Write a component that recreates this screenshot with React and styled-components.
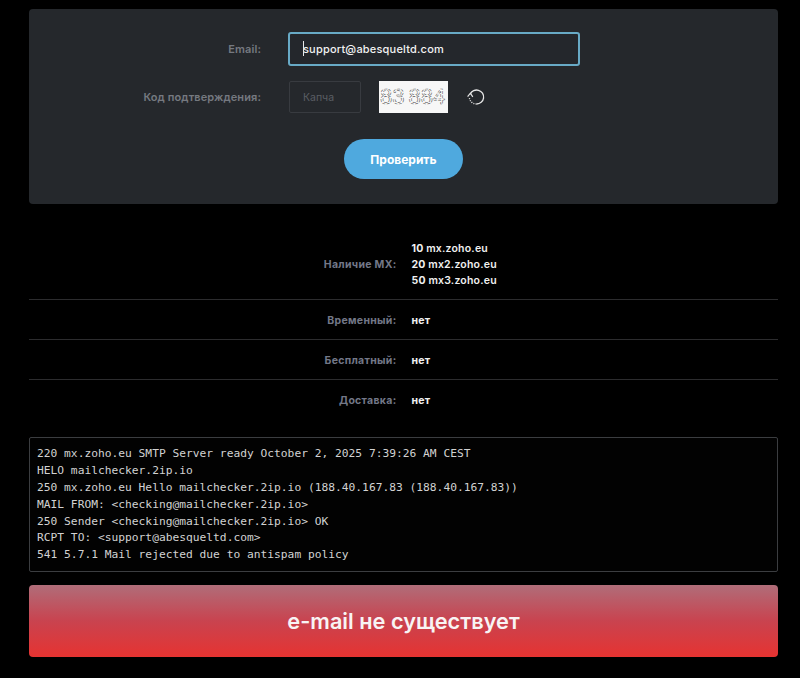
import React from 'react';
import styled, { createGlobalStyle } from 'styled-components';

const GlobalStyle = createGlobalStyle`
  html, body {
    margin: 0;
    padding: 0;
    background: #000;
  }
  * { box-sizing: border-box; }
`

const Page = styled.div`
  width: 800px;
  height: 678px;
  overflow: hidden;
  padding: 9px 22px 0 29px;
  font-family: Inter, "Noto Sans", sans-serif;
  background: #000;
`

const FormPanel = styled.form`
  height: 195px;
  padding-top: 23px;
  background: #25282c;
  border-radius: 4px;
`

const FormRow = styled.div`
  display: grid;
  grid-template-columns: 232px 1fr;
  column-gap: 27px;
  align-items: center;
  margin-bottom: 15px;
`

const FormLabel = styled.label`
  text-align: right;
  font-size: 11px;
  font-weight: 600;
  letter-spacing: 0.1px;
  color: #757980;
`

const EmailWrap = styled.div`
  position: relative;
  width: 292px;
  height: 34px;
`

const Caret = styled.span`
  position: absolute;
  left: 15px;
  top: 9px;
  width: 1px;
  height: 15px;
  background: #e8e8e8;
`

const EmailInput = styled.input`
  width: 100%;
  height: 100%;
  padding: 0 13px;
  background: #24272c;
  border: 2px solid #68aac6;
  border-radius: 3px;
  outline: none;
  color: #f2f2f2;
  font-family: inherit;
  font-size: 11px;
  font-weight: 500;
  letter-spacing: 0.2px;
`

const CaptchaRow = styled.div`
  display: flex;
  align-items: center;
  padding-left: 1px;
`

const CaptchaInput = styled.input`
  width: 72px;
  height: 32px;
  padding: 0 13px;
  background: transparent;
  border: 1px solid #383b40;
  border-radius: 2px;
  color: #eee;
  font-family: inherit;
  font-size: 10.5px;
  &::placeholder { color: #5a5e64; opacity: 1; }
`

const CaptchaImage = styled.svg`
  display: block;
  width: 69px;
  height: 32px;
  margin-left: 18px;
  background: #f7f7f7;
`

const CaptchaDigits = styled.text`
  font-family: "Liberation Sans", sans-serif;
  font-size: 22px;
  fill: #fff;
  stroke: #5c5c5c;
  stroke-width: 0.6;
  stroke-dasharray: 3 1.2;
`

const RefreshIcon = styled.svg`
  display: block;
  width: 20px;
  height: 20px;
  margin-left: 18px;
  color: #e6e6e6;
`

const SubmitWrap = styled.div`
  display: flex;
  justify-content: center;
  margin-top: 26px;
`

const SubmitButton = styled.button`
  width: 119px;
  height: 40px;
  border: 0;
  border-radius: 20px;
  background: #4fa9de;
  color: #fff;
  font-family: inherit;
  font-size: 12px;
  font-weight: 700;
`

const ResultList = styled.div`
  margin-top: 24px;
`

const ResultRow = styled.div`
  display: grid;
  grid-template-columns: 1fr 1fr;
  align-items: center;
  padding: 13px 0 10px;
  border-bottom: ${p => (p.$last ? '0' : '1px solid #2c2c2e')};
  font-size: 10.5px;
  line-height: 16px;
`

const ResultLabel = styled.div`
  padding-right: 7px;
  text-align: right;
  font-weight: 700;
  letter-spacing: 0.3px;
  color: #737888;
`

const ResultValue = styled.div`
  padding-left: 8px;
  font-weight: 700;
  letter-spacing: 0.2px;
  color: #f0f0f0;
`

const MxName = styled.span`
  font-weight: 600;
`

const SmtpLog = styled.pre`
  margin: 18px 0 0;
  padding: 8px 7px 7px;
  border: 1px solid #3b3d40;
  border-radius: 2px;
  background: #020202;
  color: #d2d2d2;
  font-family: "DejaVu Sans Mono", "Liberation Mono", monospace;
  font-size: 11.25px;
  line-height: 16.875px;
`

const ResultBanner = styled.div`
  display: flex;
  align-items: center;
  justify-content: center;
  height: 72px;
  margin-top: 13px;
  border-radius: 4px;
  background: linear-gradient(180deg, #b06d79 0%, #c9434f 50%, #e63331 100%);
  color: #f8f4f4;
  font-size: 21.75px;
  font-weight: 600;
`

const mxRecords = [
  ['10', 'mx.zoho.eu'],
  ['20', 'mx2.zoho.eu'],
  ['50', 'mx3.zoho.eu'],
]

const flags = ['Временный:', 'Бесплатный:', 'Доставка:']

const log = `220 mx.zoho.eu SMTP Server ready October 2, 2025 7:39:26 AM CEST
HELO mailchecker.2ip.io
250 mx.zoho.eu Hello mailchecker.2ip.io (188.40.167.83 (188.40.167.83))
MAIL FROM: <checking@mailchecker.2ip.io>
250 Sender <checking@mailchecker.2ip.io> OK
RCPT TO: <support@abesqueltd.com>
541 5.7.1 Mail rejected due to antispam policy`

export default function App() {
  return (
    <Page>
      <GlobalStyle />
      <FormPanel onSubmit={e => e.preventDefault()}>
        <FormRow>
          <FormLabel>Email:</FormLabel>
          <EmailWrap>
            <EmailInput defaultValue="support@abesqueltd.com" />
            <Caret />
          </EmailWrap>
        </FormRow>
        <FormRow>
          <FormLabel>Код подтверждения:</FormLabel>
          <CaptchaRow>
            <CaptchaInput placeholder="Капча" />
            <CaptchaImage viewBox="0 0 69 32">
              <CaptchaDigits x="1" y="23" dx="0 0 4 0 0">83884</CaptchaDigits>
            </CaptchaImage>
            <RefreshIcon viewBox="0 0 20 20" fill="none" stroke="currentColor" strokeWidth="1.3">
              <path d="M4.2 7.2A7 7 0 1 1 10.5 17" />
              <path d="M10.5 17A7 7 0 0 1 3.4 11" strokeDasharray="1 1.2" />
              <path d="M1.6 9.6 L4.4 6.2 L6.8 9.8" strokeWidth="1.2" />
            </RefreshIcon>
          </CaptchaRow>
        </FormRow>
        <SubmitWrap>
          <SubmitButton type="submit">Проверить</SubmitButton>
        </SubmitWrap>
      </FormPanel>

      <ResultList>
        <ResultRow>
          <ResultLabel>Наличие MX:</ResultLabel>
          <ResultValue>
            {mxRecords.map(([prio, host]) => (
              <div key={host}>{prio} <MxName>{host}</MxName></div>
            ))}
          </ResultValue>
        </ResultRow>
        {flags.map((label, i) => (
          <ResultRow key={label} $last={i === flags.length - 1}>
            <ResultLabel>{label}</ResultLabel>
            <ResultValue>нет</ResultValue>
          </ResultRow>
        ))}
      </ResultList>

      <SmtpLog>{log}</SmtpLog>
      <ResultBanner>e-mail не существует</ResultBanner>
    </Page>
  );
}
